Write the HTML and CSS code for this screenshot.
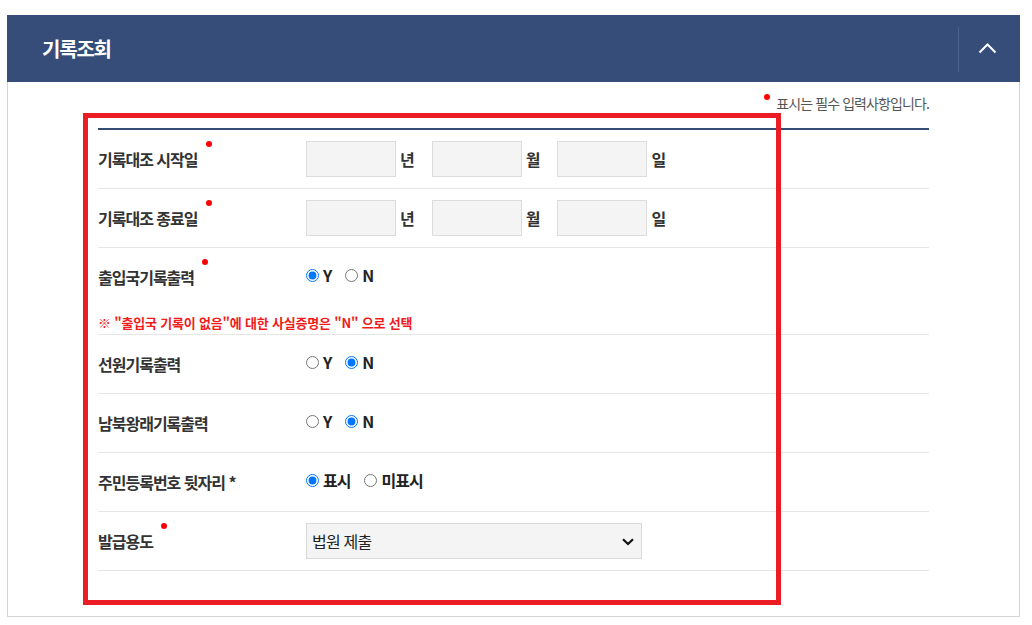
FILE: index.html
```html
<!DOCTYPE html>
<html lang="ko">
<head>
<meta charset="utf-8">
<title>기록조회</title>
<link rel="stylesheet" href="styles.css">
</head>
<body>
<section class="panel">
  <header class="panel-head">
    <h2 class="panel-title">기록조회</h2>
    <button class="toggle" type="button" aria-label="접기">
      <svg width="19" height="11" viewBox="0 0 19 11"><path d="M1.5 9.5 L9.5 1.5 L17.5 9.5" fill="none" stroke="#fff" stroke-width="2"/></svg>
    </button>
  </header>
  <div class="panel-body">
    <p class="req-note"><i class="dot"></i>표시는 필수 입력사항입니다.</p>
    <div class="form">
      <div class="row">
        <div class="line">
          <div class="label">기록대조 시작일<i class="req"></i></div>
          <div class="field">
            <input class="date-in" type="text"><span class="unit">년</span>
            <input class="date-in" type="text"><span class="unit">월</span>
            <input class="date-in" type="text"><span class="unit">일</span>
          </div>
        </div>
      </div>
      <div class="row">
        <div class="line">
          <div class="label">기록대조 종료일<i class="req"></i></div>
          <div class="field">
            <input class="date-in" type="text"><span class="unit">년</span>
            <input class="date-in" type="text"><span class="unit">월</span>
            <input class="date-in" type="text"><span class="unit">일</span>
          </div>
        </div>
      </div>
      <div class="row">
        <div class="line">
          <div class="label">출입국기록출력<i class="req"></i></div>
          <div class="field opts">
            <label class="opt"><input type="radio" name="r1" checked>Y</label>
            <label class="opt"><input type="radio" name="r1">N</label>
          </div>
        </div>
        <p class="warn">※ "출입국 기록이 없음"에 대한 사실증명은 "N" 으로 선택</p>
      </div>
      <div class="row">
        <div class="line">
          <div class="label">선원기록출력</div>
          <div class="field opts">
            <label class="opt"><input type="radio" name="r2">Y</label>
            <label class="opt"><input type="radio" name="r2" checked>N</label>
          </div>
        </div>
      </div>
      <div class="row">
        <div class="line">
          <div class="label">남북왕래기록출력</div>
          <div class="field opts">
            <label class="opt"><input type="radio" name="r3">Y</label>
            <label class="opt"><input type="radio" name="r3" checked>N</label>
          </div>
        </div>
      </div>
      <div class="row">
        <div class="line">
          <div class="label">주민등록번호 뒷자리 *</div>
          <div class="field opts">
            <label class="opt"><input type="radio" name="r4" checked>표시</label>
            <label class="opt"><input type="radio" name="r4">미표시</label>
          </div>
        </div>
      </div>
      <div class="row">
        <div class="line">
          <div class="label">발급용도<i class="req"></i></div>
          <div class="field">
            <div class="select-wrap">
              <select class="select"><option>법원 제출</option></select>
              <svg class="caret" width="12" height="8" viewBox="0 0 12 8"><path d="M1 1.2 L6 6 L11 1.2" fill="none" stroke="#111" stroke-width="2.2"/></svg>
            </div>
          </div>
        </div>
      </div>
    </div>
    <div class="highlight"></div>
  </div>
</section>
</body>
</html>
```
FILE: styles.css
```css
* { box-sizing: border-box; }
body {
  margin: 0;
  background: #fff;
  font-family: "Noto Sans CJK KR", "Noto Sans", sans-serif;
  color: #333;
  letter-spacing: -1px;
}
.panel {
  margin: 15px 0 0 7px;
  width: 1013px;
}
.panel-head {
  height: 67px;
  background: #354d78;
  display: flex;
  align-items: center;
  justify-content: space-between;
}
.panel-title {
  margin: 0 0 0 35px;
  font-size: 20px;
  font-weight: 700;
  line-height: 24px;
  color: #fff;
  letter-spacing: -1.2px;
}
.toggle {
  width: 62px;
  height: 45px;
  margin-top: 2px;
  padding: 0 5px 3px 0;
  border: 0;
  border-left: 1px solid #4b6190;
  background: none;
  display: flex;
  align-items: center;
  justify-content: center;
}
.panel-body {
  position: relative;
  border: 1px solid #d5d5d5;
  border-top: 0;
  padding: 11px 90px 45px;
}
.req-note {
  margin: 0 0 15px;
  text-align: right;
  font-size: 14px;
  line-height: 20px;
  color: #555;
  letter-spacing: -0.9px;
}
.dot {
  display: inline-block;
  width: 6px;
  height: 6px;
  border-radius: 50%;
  background: #f00;
  vertical-align: top;
  margin: 1px 6px 0 0;
}
.form {
  border-top: 2px solid #344b76;
}
.row {
  border-bottom: 1px solid #e6e6e6;
}
.line {
  height: 58px;
  display: flex;
  align-items: center;
}
.label {
  width: 208px;
  flex: none;
  font-size: 16px;
  font-weight: 700;
  line-height: 20px;
  color: #333;
}
.req {
  display: inline-block;
  width: 6px;
  height: 6px;
  border-radius: 50%;
  background: #f00;
  vertical-align: top;
  margin: -8px 0 0 8px;
}
.field {
  display: flex;
  align-items: center;
}
.date-in {
  width: 90px;
  height: 36px;
  margin: 0;
  border: 1px solid #dcdcdc;
  background: #f4f4f4;
}
.unit {
  margin: 0 18px 0 4px;
  font-size: 16px;
  font-weight: 700;
  line-height: 20px;
  color: #333;
}
.opts {
  margin-bottom: 4px;
}
.opt {
  display: flex;
  align-items: center;
  gap: 4px;
  margin-right: 14px;
  font-size: 16px;
  font-weight: 700;
  line-height: 20px;
  color: #222;
}
.opt input {
  width: 13px;
  height: 13px;
  margin: 0;
}
.warn {
  margin: 8px 0 0;
  padding-bottom: 2px;
  font-size: 13px;
  font-weight: 700;
  line-height: 18px;
  color: #f01c1c;
  letter-spacing: -0.2px;
}
.select-wrap {
  position: relative;
  width: 336px;
  height: 36px;
}
.select {
  width: 100%;
  height: 100%;
  appearance: none;
  -webkit-appearance: none;
  border: 1px solid #d9d9d9;
  border-radius: 0;
  background: #f4f4f4;
  padding: 0 30px 0 5px;
  font-family: "Noto Sans CJK KR", "Noto Sans", sans-serif;
  font-size: 16px;
  color: #222;
  letter-spacing: -0.8px;
}
.caret {
  position: absolute;
  right: 8px;
  top: 15px;
  pointer-events: none;
}
.highlight {
  position: absolute;
  left: 75px;
  top: 31px;
  width: 698px;
  height: 492px;
  border: 5px solid #ec1c24;
  pointer-events: none;
}
```
